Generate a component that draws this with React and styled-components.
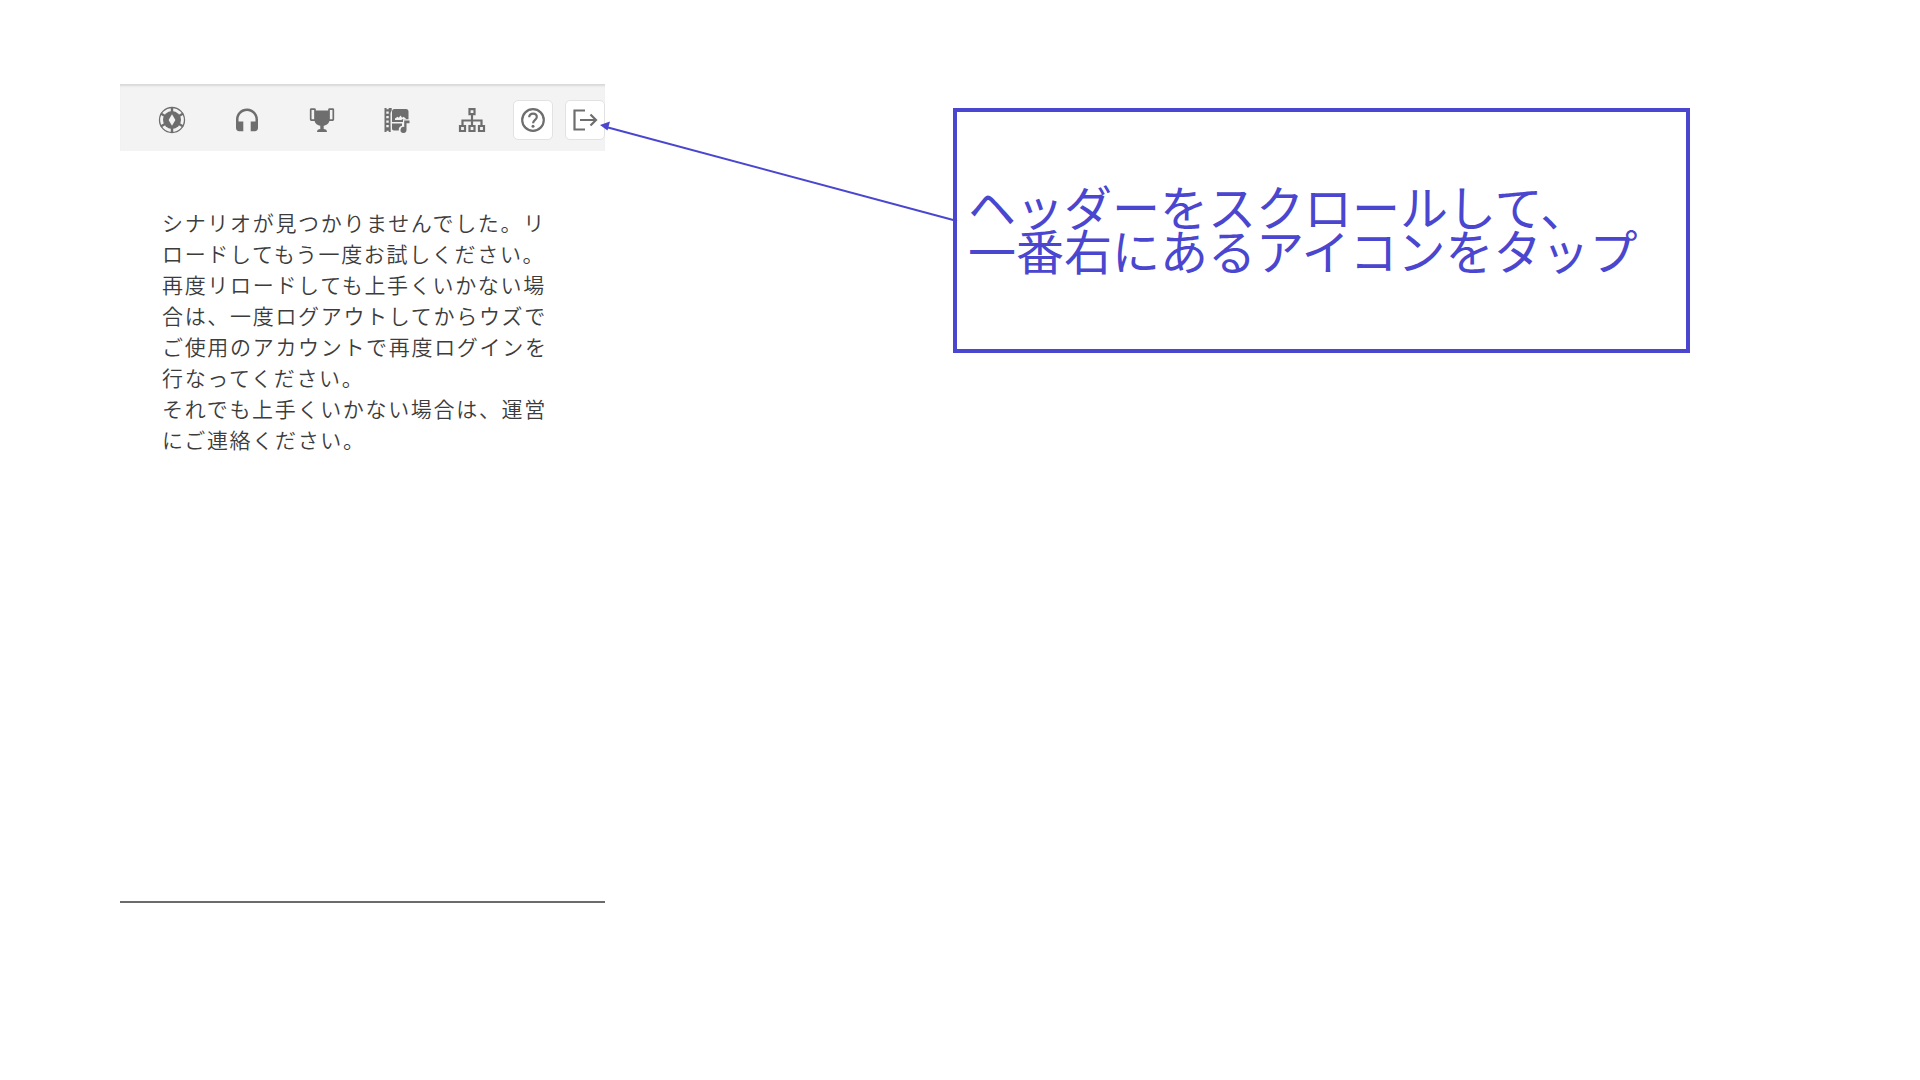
import React from "react";
import styled, { createGlobalStyle } from "styled-components";

const Global = createGlobalStyle`
  * { box-sizing: border-box; }
  body { margin: 0; background: #fff; font-family: "Noto Sans CJK JP", "Noto Sans", sans-serif; }
`;

const Slide = styled.main`
  display: grid;
  grid-template-columns: minmax(0, 485fr) minmax(0, 348fr) minmax(0, 737fr);
  align-items: start;
  padding: 84px 230px 84px 120px;
`;

const Screen = styled.section`
  display: flex;
  flex-direction: column;
  min-height: 819px;
  border-bottom: 2px solid #6b6b6b;
`;

const Toolbar = styled.nav`
  display: flex;
  align-items: center;
  height: 67px;
  padding: 5px 0 0 14px;
  overflow: hidden;
  background: #f3f3f3;
  box-shadow: inset 0 3px 2px -1px #d8d8d8;
`;

const IconButton = styled.button`
  display: grid;
  place-items: center;
  flex: none;
  width: 75px;
  height: 40px;
  padding: 0;
  border: 0;
  background: none;
  color: #6e6e6e;
`;

const BoxedButton = styled(IconButton)`
  width: 40px;
  margin-left: ${(p) => p.$gap}px;
  border: 1px solid #e2e2e2;
  border-radius: 5px;
  background: #fff;
`;

const Icon = styled.svg`
  display: block;
  width: 28px;
  height: 28px;
`;

const Message = styled.p`
  margin: 0;
  padding: 56px 56px 0 42px;
  color: #3c3c3c;
  font-size: 21px;
  line-height: 31px;
  letter-spacing: 0.08em;
  font-weight: 350;
`;

const Connector = styled.svg`
  display: block;
  width: calc(100% + 10px);
  margin: 34px -5px 0;
  overflow: visible;
  position: relative;
`;

const Callout = styled.aside`
  display: flex;
  align-items: center;
  min-height: 245px;
  margin-top: 24px;
  padding: 0 11px 8px;
  border: 4px solid #4a46cf;
  color: #4a46cf;
  font-size: 48px;
  line-height: 44px;
`;

const Chip = () => (
  <Icon viewBox="0 0 28 28" aria-hidden="true">
    <circle cx="14" cy="14" r="12.5" fill="none" stroke="currentColor" strokeWidth="1.3" />
    <circle cx="14" cy="14" r="9" fill="currentColor" />
    <g stroke="currentColor" strokeWidth="2.4">
      <path d="M14 1v26M2.700 7.500l22.600 13M2.700 20.500l22.600-13" />
    </g>
    <path d="M14 8.200l3.400 5.800-3.400 5.800-3.400-5.800z" fill="#f3f3f3" />
  </Icon>
);

const Headphones = () => (
  <Icon viewBox="0 0 28 28" aria-hidden="true">
    <path fill="currentColor" d="M14 2.500C7.900 2.500 3 7.400 3 13.500V22c0 1.900 1.300 3.200 3.200 3.200h4.100v-9.700H5.500v-2c0-4.700 3.800-8.500 8.500-8.500s8.500 3.800 8.500 8.500v2h-4.800v9.700h4.100c1.900 0 3.200-1.300 3.200-3.200v-8.500c0-6.100-4.900-11-11-11z" />
  </Icon>
);

const Trophy = () => (
  <Icon viewBox="0 0 28 28" aria-hidden="true">
    <path fill="currentColor" d="M6.500 4.500h15V14c0 3-2.500 5-5.800 5.700v3.200c2 .2 3.300.9 3.300 3H9c0-2.100 1.300-2.800 3.300-3v-3.200C9 19 6.500 17 6.500 14z" />
    <rect x="2.700" y="3.100" width="4.300" height="11" rx="0.500" fill="#f3f3f3" stroke="currentColor" strokeWidth="1.700" />
    <rect x="21" y="3.100" width="4.300" height="11" rx="0.500" fill="#f3f3f3" stroke="currentColor" strokeWidth="1.700" />
  </Icon>
);

const Media = () => (
  <Icon viewBox="0 0 28 28" aria-hidden="true">
    <path fill="currentColor" d="M1.500 2h2v1.300h2.200V2h3v2.500L7.500 7v10l.2 9H5.700v-1.300H3.500V26h-2z" />
    <path fill="#f3f3f3" d="M3.300 5.500h2.400v2.300H3.300zM3.300 10h2.400v2.300H3.300zM3.300 14.500h2.400v2.300H3.300zM3.300 19h2.400v2.300H3.300z" />
    <path fill="currentColor" d="M11.500 3H23c1.700 0 2.500 1 2.500 2.500V13.300h-5.500V16H9V5.500C9 4 10 3 11.500 3z" />
    <path fill="#f3f3f3" d="M12 14v-1.500l2.500-1.800 1.300 1 1.700-2.200 1.700 2.200 1.300-1 2.300 1.800v.8h-4V14z" />
    <path fill="currentColor" d="M9 17.500h10v2.300c-2 .3-3.600 2-3.200 4.700H11c-1.300 0-2-.8-2-2z" />
    <path fill="currentColor" d="M21.200 14.500h5.300v2.700h-3v6.600a3 3 0 1 1-2.300-2.800z" />
  </Icon>
);

const Sitemap = () => (
  <Icon viewBox="0 0 28 28" aria-hidden="true">
    <g fill="none" stroke="currentColor" strokeWidth="2.200">
      <path d="M11.500 3.200h5v5h-5zM2 20h5v5H2zM11.500 20h5v5h-5zM21 20h5v5h-5zM14 8.500V20M4.500 20v-5.500h19V20" />
    </g>
  </Icon>
);

const Help = () => (
  <Icon viewBox="0 0 28 28" aria-hidden="true">
    <g fill="none" stroke="currentColor" strokeWidth="2.200">
      <circle cx="14" cy="14" r="10.800" />
      <path d="M10.200 11.200c0-2.200 1.600-3.600 3.800-3.600s3.800 1.400 3.800 3.500c0 2.700-3.700 3-3.700 6.200" />
    </g>
    <circle cx="14" cy="20.300" r="1.500" fill="currentColor" />
  </Icon>
);

const Exit = () => (
  <Icon viewBox="0 0 28 28" aria-hidden="true">
    <g fill="none" stroke="currentColor" strokeWidth="2.200">
      <path d="M14 4.500H3.500v19H14M9 14h16M19.500 8.500L25 14l-5.500 5.500" />
    </g>
  </Icon>
);

export default function App() {
  return (
    <>
      <Global />
      <Slide>
        <Screen>
          <Toolbar>
            <IconButton aria-label="チップ"><Chip /></IconButton>
            <IconButton aria-label="オーディオ"><Headphones /></IconButton>
            <IconButton aria-label="トロフィー"><Trophy /></IconButton>
            <IconButton aria-label="メディア"><Media /></IconButton>
            <IconButton aria-label="構成"><Sitemap /></IconButton>
            <BoxedButton $gap={4} aria-label="ヘルプ"><Help /></BoxedButton>
            <BoxedButton $gap={12} aria-label="ログアウト"><Exit /></BoxedButton>
          </Toolbar>
          <Message>
            シナリオが見つかりませんでした。リロードしてもう一度お試しください。再度リロードしても上手くいかない場合は、一度ログアウトしてからウズでご使用のアカウントで再度ログインを行なってください。
            <br />
            それでも上手くいかない場合は、運営にご連絡ください。
          </Message>
        </Screen>
        <Connector viewBox="0 0 358 110" aria-hidden="true">
          <path d="M8 9.500L357 103" stroke="#4a46cf" strokeWidth="2" fill="none" />
          <path d="M0 7l10-3.500-2.500 9z" fill="#4a46cf" />
        </Connector>
        <Callout>
          <span>
            ヘッダーをスクロールして、
            <br />
            一番右にあるアイコンをタップ
          </span>
        </Callout>
      </Slide>
    </>
  );
}
